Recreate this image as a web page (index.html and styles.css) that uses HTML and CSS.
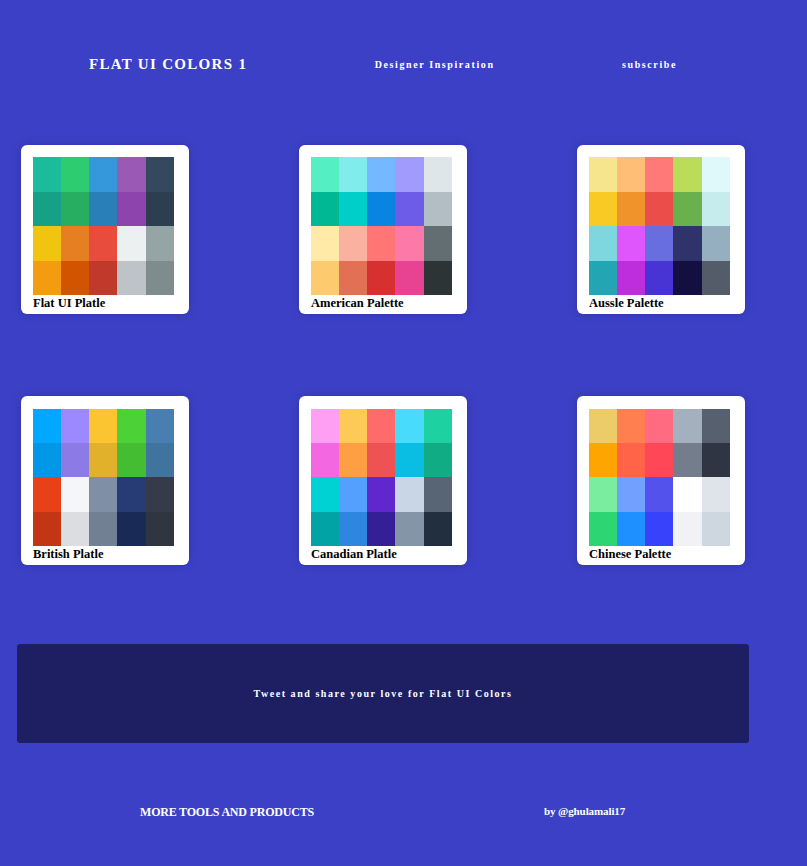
FILE: index.html
```html
<!DOCTYPE html>
<html>
<head>
<meta charset="utf-8">
<link rel="stylesheet" href="styles.css">
</head>
<body>
<header class="header">
  <div class="brand">FLAT UI COLORS 1</div>
  <div class="nav-link">Designer Inspiration</div>
  <div class="nav-link">subscribe</div>
</header>

<main class="palettes">
  <div class="row">
    <div class="card">
      <div class="grid">
        <i style="background:#1abc9c"></i><i style="background:#2ecc71"></i><i style="background:#3498db"></i><i style="background:#9b59b6"></i><i style="background:#34495e"></i>
        <i style="background:#16a085"></i><i style="background:#27ae60"></i><i style="background:#2980b9"></i><i style="background:#8e44ad"></i><i style="background:#2c3e50"></i>
        <i style="background:#f1c40f"></i><i style="background:#e67e22"></i><i style="background:#e74c3c"></i><i style="background:#ecf0f1"></i><i style="background:#95a5a6"></i>
        <i style="background:#f39c12"></i><i style="background:#d35400"></i><i style="background:#c0392b"></i><i style="background:#bdc3c7"></i><i style="background:#7f8c8d"></i>
      </div>
      <div class="label">Flat UI Platle</div>
    </div>
    <div class="card">
      <div class="grid">
        <i style="background:#55efc4"></i><i style="background:#81ecec"></i><i style="background:#74b9ff"></i><i style="background:#a29bfe"></i><i style="background:#dfe6e9"></i>
        <i style="background:#00b894"></i><i style="background:#00cec9"></i><i style="background:#0984e3"></i><i style="background:#6c5ce7"></i><i style="background:#b2bec3"></i>
        <i style="background:#ffeaa7"></i><i style="background:#fab1a0"></i><i style="background:#ff7675"></i><i style="background:#fd79a8"></i><i style="background:#636e72"></i>
        <i style="background:#fdcb6e"></i><i style="background:#e17055"></i><i style="background:#d63031"></i><i style="background:#e84393"></i><i style="background:#2d3436"></i>
      </div>
      <div class="label">American Palette</div>
    </div>
    <div class="card">
      <div class="grid">
        <i style="background:#f6e58d"></i><i style="background:#ffbe76"></i><i style="background:#ff7979"></i><i style="background:#badc58"></i><i style="background:#dff9fb"></i>
        <i style="background:#f9ca24"></i><i style="background:#f0932b"></i><i style="background:#eb4d4b"></i><i style="background:#6ab04c"></i><i style="background:#c7ecee"></i>
        <i style="background:#7ed6df"></i><i style="background:#e056fd"></i><i style="background:#686de0"></i><i style="background:#30336b"></i><i style="background:#95afc0"></i>
        <i style="background:#22a6b3"></i><i style="background:#be2edd"></i><i style="background:#4834d4"></i><i style="background:#130f40"></i><i style="background:#535c68"></i>
      </div>
      <div class="label">Aussle Palette</div>
    </div>
  </div>
  <div class="row">
    <div class="card">
      <div class="grid">
        <i style="background:#00a8ff"></i><i style="background:#9c88ff"></i><i style="background:#fbc531"></i><i style="background:#4cd137"></i><i style="background:#487eb0"></i>
        <i style="background:#0097e6"></i><i style="background:#8c7ae6"></i><i style="background:#e1b12c"></i><i style="background:#44bd32"></i><i style="background:#40739e"></i>
        <i style="background:#e84118"></i><i style="background:#f5f6fa"></i><i style="background:#7f8fa6"></i><i style="background:#273c75"></i><i style="background:#353b48"></i>
        <i style="background:#c23616"></i><i style="background:#dcdde1"></i><i style="background:#718093"></i><i style="background:#192a56"></i><i style="background:#2f3640"></i>
      </div>
      <div class="label">British Platle</div>
    </div>
    <div class="card">
      <div class="grid">
        <i style="background:#ff9ff3"></i><i style="background:#feca57"></i><i style="background:#ff6b6b"></i><i style="background:#48dbfb"></i><i style="background:#1dd1a1"></i>
        <i style="background:#f368e0"></i><i style="background:#ff9f43"></i><i style="background:#ee5253"></i><i style="background:#0abde3"></i><i style="background:#10ac84"></i>
        <i style="background:#00d2d3"></i><i style="background:#54a0ff"></i><i style="background:#5f27cd"></i><i style="background:#c8d6e5"></i><i style="background:#576574"></i>
        <i style="background:#01a3a4"></i><i style="background:#2e86de"></i><i style="background:#341f97"></i><i style="background:#8395a7"></i><i style="background:#222f3e"></i>
      </div>
      <div class="label">Canadian Platle</div>
    </div>
    <div class="card">
      <div class="grid">
        <i style="background:#eccc68"></i><i style="background:#ff7f50"></i><i style="background:#ff6b81"></i><i style="background:#a4b0be"></i><i style="background:#57606f"></i>
        <i style="background:#ffa502"></i><i style="background:#ff6348"></i><i style="background:#ff4757"></i><i style="background:#747d8c"></i><i style="background:#2f3542"></i>
        <i style="background:#7bed9f"></i><i style="background:#70a1ff"></i><i style="background:#5352ed"></i><i style="background:#ffffff"></i><i style="background:#dfe4ea"></i>
        <i style="background:#2ed573"></i><i style="background:#1e90ff"></i><i style="background:#3742fa"></i><i style="background:#f1f2f6"></i><i style="background:#ced6e0"></i>
      </div>
      <div class="label">Chinese Palette</div>
    </div>
  </div>
</main>

<section class="tweet">Tweet and share your love for Flat UI Colors</section>

<footer class="footer">
  <div class="more">MORE TOOLS AND PRODUCTS</div>
  <div class="by">by @ghulamali17</div>
</footer>
</body>
</html>
```

FILE: styles.css
```css
html, body {
  margin: 0;
  padding: 0;
}
body {
  background: #3c40c6;
  font-family: "Liberation Serif", "Times New Roman", serif;
  color: #ffffff;
  width: 807px;
  height: 866px;
  overflow: hidden;
}
.header {
  display: flex;
  justify-content: space-between;
  align-items: center;
  height: 20px;
  margin-top: 54px;
  padding: 0 130px 0 89px;
}
.brand {
  font-weight: bold;
  font-size: 15px;
  letter-spacing: 1.3px;
}
.nav-link {
  font-weight: bold;
  font-size: 10px;
  letter-spacing: 1.6px;
}
.palettes {
  display: flex;
  flex-direction: column;
  gap: 82px;
  margin-top: 71px;
  padding-left: 21px;
}
.row {
  display: flex;
  gap: 110px;
}
.card {
  width: 168px;
  height: 169px;
  box-sizing: border-box;
  padding: 12px 0 0 12px;
  background: #ffffff;
  border-radius: 6px;
  box-shadow: 0 0 8px rgba(20, 20, 80, 0.25);
}
.row + .row .card {
  padding-top: 13px;
}
.grid {
  display: grid;
  grid-template-columns: 28px 28px 28px 29px 28px;
  grid-template-rows: 35px 34px 35px 34px;
  width: 141px;
}
.row + .row .grid {
  grid-template-rows: 34px 34px 35px 34px;
}
.grid i {
  display: block;
}
.label {
  color: #000000;
  font-weight: bold;
  font-size: 12.5px;
  line-height: 15px;
  margin-top: 1px;
}
.tweet {
  margin: 79px 0 0 17px;
  width: 732px;
  height: 99px;
  background: #1e1f63;
  border-radius: 3px;
  display: flex;
  align-items: center;
  justify-content: center;
  font-weight: bold;
  font-size: 10px;
  letter-spacing: 1.55px;
}
.footer {
  display: flex;
  margin-top: 62px;
  padding-left: 140px;
  gap: 230px;
  font-weight: bold;
  font-size: 12px;
}
.more {
  letter-spacing: -0.2px;
}
.by {
  font-size: 11px;
  letter-spacing: -0.1px;
}
```
